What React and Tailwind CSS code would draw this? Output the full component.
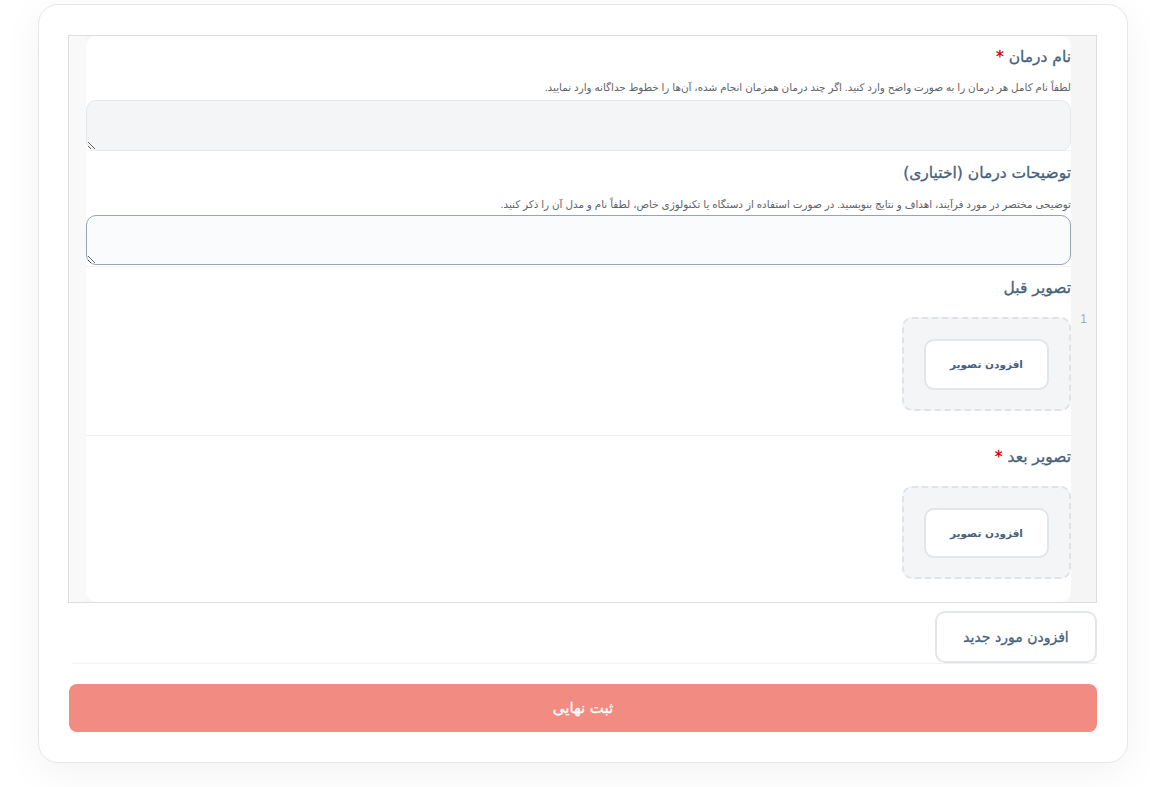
import React from "react";

// Sarbarg-e har bakhsh-e form
function Heading({ children, required }) {
  return (
    <div className="h-[26px] text-[15.5px] leading-[26px] font-normal [-webkit-text-stroke:0.3px_#475f7b] text-[#475f7b] whitespace-nowrap">
      {children}
      {required && <span className="text-[#cc0000] [-webkit-text-stroke:0.3px_#cc0000]"> *</span>}
    </div>
  );
}

function Helper({ children }) {
  return (
    <p className="mt-[10px] h-[16px] text-[10.4px] leading-[16px] text-[#5f6368] font-['Liberation_Sans','DejaVu_Sans',sans-serif] whitespace-nowrap">
      {children}
    </p>
  );
}

function UploadBox({ small }) {
  return (
    <div className={`mt-[16px] w-[169px] flex items-center justify-center rounded-[10px] border-2 border-dashed border-[#dfe3e8] bg-[#f4f5f7] ${small ? "h-[93px]" : "h-[94px]"}`}>
      <button className={`w-[125px] pt-[2px] bg-white rounded-[10px] border-2 border-[#e2e5e9] text-[10.5px] font-bold text-[#475f7b] ${small ? "h-[50px]" : "h-[51px]"}`}>
        افزودن تصویر
      </button>
    </div>
  );
}

export default function App() {
  return (
    <div dir="rtl" className="min-h-screen bg-white px-[22px] pt-[4px] font-['DejaVu_Sans','Liberation_Sans',sans-serif]">
      <div className="w-[1090px] h-[759px] bg-white rounded-[20px] border border-[#e5e7eb] shadow-[0_10px_40px_rgba(0,0,0,0.05)] pt-[30px] px-[30px]">

        {/* ---- jadval-e mavared ---- */}
        <div className="flex h-[568px] ml-[-1px] border border-[#dddddd] bg-[#f6f6f6]">
          <div className="w-[25px] shrink-0 bg-[#f5f5f5] flex items-center justify-center text-[12px] text-[#aaaaaa] font-['Liberation_Sans',sans-serif]">
            1
          </div>

          <div className="flex-1 bg-white rounded-[10px] overflow-hidden">
            <section className="h-[115px] pt-[8px] border-b border-[#f0f0f0]">
              <Heading required>نام درمان</Heading>
              <Helper>لطفاً نام کامل هر درمان را به صورت واضح وارد کنید. اگر چند درمان همزمان انجام شده، آن‌ها را خطوط جداگانه وارد نمایید.</Helper>
              <textarea className="block w-full h-[51px] mt-[4px] rounded-[10px] border border-[#e5e7eb] bg-[#f4f5f7] resize-y outline-none" />
            </section>

            <section className="h-[115px] pt-[9px]">
              <Heading>توضیحات درمان (اختیاری)</Heading>
              <p className="mt-[11px] h-[16px] text-[10.4px] leading-[16px] text-[#5f6368] font-['Liberation_Sans','DejaVu_Sans',sans-serif] whitespace-nowrap">
                توضیحی مختصر در مورد فرآیند، اهداف و نتایج بنویسید. در صورت استفاده از دستگاه یا تکنولوژی خاص، لطفاً نام و مدل آن را ذکر کنید.
              </p>
              <textarea className="block w-full h-[50px] mt-[2px] rounded-[10px] border border-[#98a2b3] bg-[#f9fbfd] resize-y outline-none" />
            </section>

            <section className="h-[170px] pt-[8px] border-t border-[#f0f0f0] border-b">
              <Heading>تصویر قبل</Heading>
              <UploadBox />
            </section>

            <section className="pt-[8px]">
              <Heading required>تصویر بعد</Heading>
              <UploadBox small />
            </section>
          </div>

          <div className="w-[17px] shrink-0 bg-[#f9f9f9]" />
        </div>

        {/* ---- afzoodan-e mored ---- */}
        <div className="mt-[8px] ml-[3px] border-b border-[#f0f1f3] h-[53px]">
          <button className="w-[162px] h-[52px] bg-white rounded-[10px] border-2 border-[#e2e5e9] text-[14px] font-normal [-webkit-text-stroke:0.3px_#475f7b] text-[#475f7b]">
            افزودن مورد جدید
          </button>
        </div>

        <button className="mt-[20px] w-full h-[48px] rounded-[8px] bg-[#f28b82] text-white text-[15px] font-normal [-webkit-text-stroke:0.3px_#ffffff]">
          ثبت نهایی
        </button>
      </div>
    </div>
  );
}
